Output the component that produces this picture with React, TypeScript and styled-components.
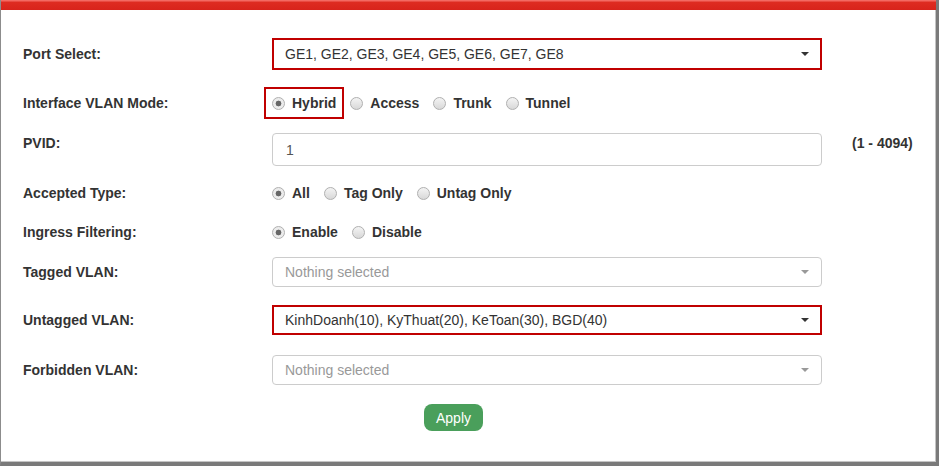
import React from 'react'
import styled, { createGlobalStyle } from 'styled-components'

const GlobalStyle = createGlobalStyle`
  html, body {
    margin: 0;
    padding: 0;
    background: #fff;
  }
  body {
    font-family: 'Liberation Sans', Arial, sans-serif;
    color: #333;
  }
  * {
    box-sizing: border-box;
  }
`

export default function App() {
  return (
    <>
      <GlobalStyle />
      <Frame>
        <TopBar />
        <Form>
          <Row $mt={0} $h={32}>
            <Label>Port Select:</Label>
            <Select value="GE1, GE2, GE3, GE4, GE5, GE6, GE7, GE8" highlight />
          </Row>
          <Row $mt={18} $h={30}>
            <Label>Interface VLAN Mode:</Label>
            <RadioGroup
              options={['Hybrid', 'Access', 'Trunk', 'Tunnel']}
              checked="Hybrid"
              highlight="Hybrid"
            />
          </Row>
          <Row $mt={15} $h={33} $align="start">
            <Label $top={2}>PVID:</Label>
            <Input>1</Input>
            <Hint>(1 - 4094)</Hint>
          </Row>
          <Row $mt={12} $h={30}>
            <Label>Accepted Type:</Label>
            <RadioGroup options={['All', 'Tag Only', 'Untag Only']} checked="All" />
          </Row>
          <Row $mt={9} $h={30}>
            <Label>Ingress Filtering:</Label>
            <RadioGroup options={['Enable', 'Disable']} checked="Enable" />
          </Row>
          <Row $mt={10} $h={30}>
            <Label>Tagged VLAN:</Label>
            <Select />
          </Row>
          <Row $mt={18} $h={30}>
            <Label>Untagged VLAN:</Label>
            <Select value="KinhDoanh(10), KyThuat(20), KeToan(30), BGD(40)" highlight />
          </Row>
          <Row $mt={20} $h={30}>
            <Label>Forbidden VLAN:</Label>
            <Select />
          </Row>
          <Actions>
            <ApplyButton>Apply</ApplyButton>
          </Actions>
        </Form>
      </Frame>
    </>
  )
}

const Select = ({ value, highlight }: SelectProps) => (
  <SelectBox $highlight={!!highlight} $empty={!value}>
    <span>{value || 'Nothing selected'}</span>
    <Caret />
  </SelectBox>
)

const RadioGroup = ({ options, checked, highlight }: RadioGroupProps) => (
  <Radios>
    {options.map((o) => (
      <RadioItem key={o} $highlight={o === highlight}>
        <RadioDot $checked={o === checked} />
        {o}
      </RadioItem>
    ))}
  </Radios>
)

interface SelectProps {
  value?: string
  highlight?: boolean
}

interface RadioGroupProps {
  options: string[]
  checked: string
  highlight?: string
}

const Frame = styled.div`
  width: 939px;
  height: 466px;
  background: #fff;
  border-left: 1px solid #8c8c8c;
  border-right: 3px solid #7a7a7a;
  border-bottom: 4px solid #7a7a7a;
  box-shadow: inset -1px -1px 0 #c4c4c4;
  display: flex;
  flex-direction: column;
  overflow: hidden;
`

const TopBar = styled.div`
  height: 10px;
  flex: none;
  background: linear-gradient(
    to bottom,
    #f36a62 0,
    #f36a62 1px,
    #de2c21 2px,
    #d8241b 100%
  );
`

const Form = styled.div`
  padding: 28px 0 0 22px;
`

const Row = styled.div<{ $mt: number; $h: number; $align?: string }>`
  display: grid;
  grid-template-columns: 249px 550px auto;
  align-items: ${(p) => p.$align || 'center'};
  margin-top: ${(p) => p.$mt}px;
  height: ${(p) => p.$h}px;
`

const Label = styled.div<{ $top?: number }>`
  font-size: 14px;
  line-height: 16px;
  font-weight: bold;
  color: #333;
  padding-top: ${(p) => p.$top || 0}px;
`

const Hint = styled.div`
  margin-left: 30px;
  font-size: 14px;
  line-height: 16px;
  font-weight: bold;
  color: #333;
  white-space: nowrap;
  padding-top: 2px;
`

const SelectBox = styled.div<{ $highlight: boolean; $empty: boolean }>`
  height: 100%;
  display: flex;
  align-items: center;
  justify-content: space-between;
  border: ${(p) => (p.$highlight ? '2px solid #c00000' : '1px solid #ccc')};
  border-radius: ${(p) => (p.$highlight ? '0' : '4px')};
  padding: 0 ${(p) => (p.$highlight ? 11 : 12)}px 0
    ${(p) => (p.$highlight ? 11 : 12)}px;
  font-size: 14px;
  color: ${(p) => (p.$empty ? '#999' : '#333')};
  background: #fff;
`

const Caret = styled.span`
  width: 0;
  height: 0;
  border-top: 4px solid currentColor;
  border-left: 4px solid transparent;
  border-right: 4px solid transparent;
`

const Input = styled.div`
  height: 100%;
  display: flex;
  align-items: center;
  border: 1px solid #ccc;
  border-radius: 4px;
  padding-left: 13px;
  font-size: 14px;
  color: #555;
`

const Radios = styled.div`
  display: flex;
  align-items: center;
  gap: 14px;
`

const RadioItem = styled.label<{ $highlight: boolean }>`
  display: inline-flex;
  align-items: center;
  gap: 7px;
  font-size: 14px;
  line-height: 16px;
  font-weight: bold;
  color: #333;
  outline: ${(p) => (p.$highlight ? '2px solid #c00000' : 'none')};
  outline-offset: 6px;
`

const RadioDot = styled.span<{ $checked: boolean }>`
  width: 13px;
  height: 13px;
  border-radius: 50%;
  border: 1px solid #b0b0b0;
  background: ${(p) =>
    p.$checked
      ? 'radial-gradient(circle, #666 0 2.6px, #ececec 3.2px)'
      : 'linear-gradient(#f4f4f4, #d8d8d8)'};
`

const Actions = styled.div`
  margin-top: 19px;
  padding-left: 401px;
`

const ApplyButton = styled.button`
  height: 27px;
  padding: 0 12px;
  border: none;
  border-radius: 8px;
  background: #4a9f5b;
  color: #fff;
  font-family: 'Liberation Sans', Arial, sans-serif;
  font-size: 14px;
  cursor: pointer;
`
